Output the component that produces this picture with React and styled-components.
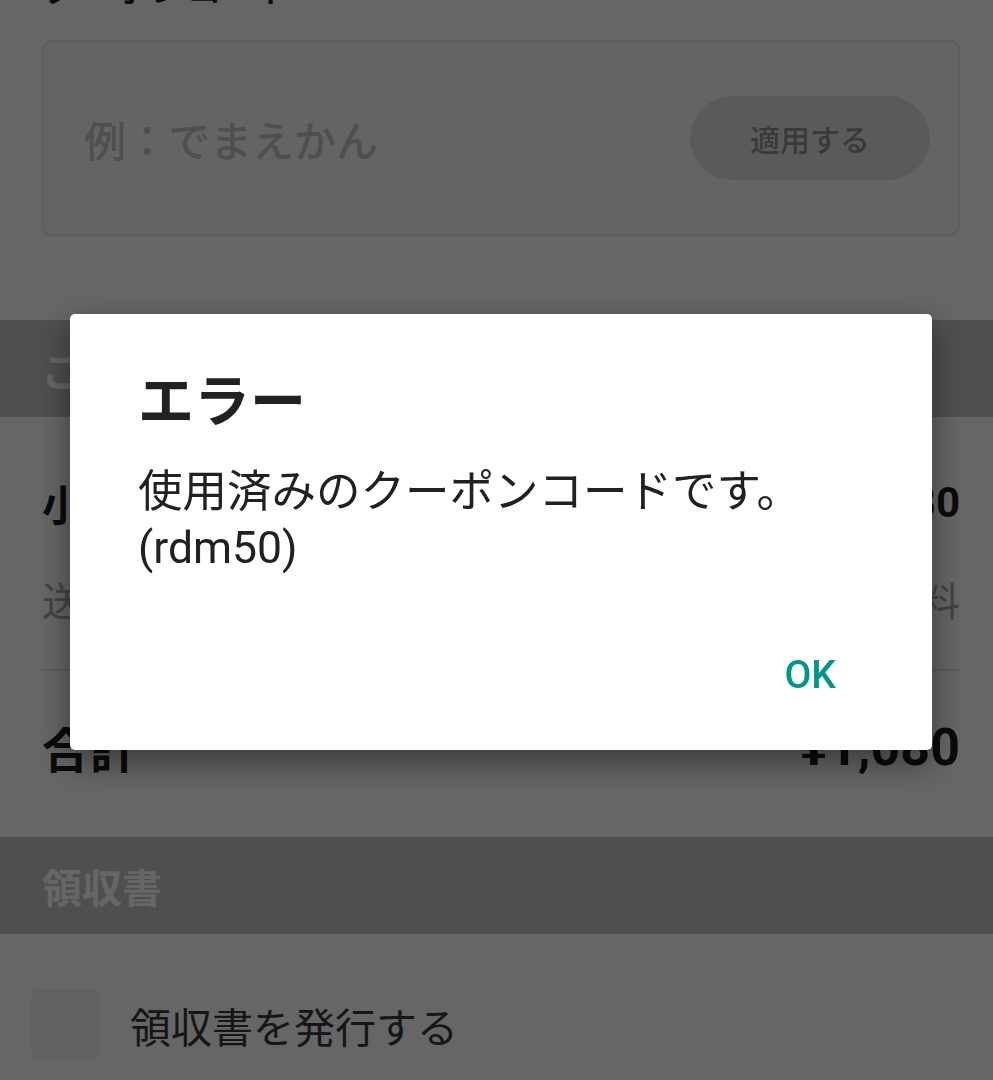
import React from 'react';
import styled, { createGlobalStyle } from 'styled-components';

const GlobalStyle = createGlobalStyle`
  html, body {
    margin: 0;
    padding: 0;
    background: #ffffff;
    height: 1080px;
    overflow: hidden;
  }
  body {
    font-family: Roboto, "Noto Sans CJK JP", "Noto Sans", sans-serif;
    color: #1a1a1a;
  }
`;

const Page = styled.div`
  display: flex;
  flex-direction: column;
  margin-top: -32px;
`;

const CouponSection = styled.section`
  display: flex;
  flex-direction: column;
  padding: 0 33px 84px 42px;
`;

const FieldLabel = styled.div`
  font-size: 36px;
  line-height: 44px;
  font-weight: 500;
  color: #1a1a1a;
`;

const CouponBox = styled.div`
  margin-top: 28px;
  height: 196px;
  box-sizing: border-box;
  border: 2px solid #ececec;
  border-radius: 10px;
  background: #fafafa;
  display: flex;
  align-items: center;
  justify-content: space-between;
  padding: 0 28px 0 40px;
`;

const Placeholder = styled.span`
  font-size: 42px;
  color: #c6c6c6;
  font-weight: 500;
`;

const ApplyButton = styled.button`
  width: 240px;
  height: 84px;
  border: none;
  border-radius: 42px;
  background: #e2e2e2;
  color: #8e8e8e;
  font-family: inherit;
  font-size: 30px;
  font-weight: 500;
`;

const SectionHeader = styled.div`
  height: 97px;
  background: #c5c5c5;
  display: flex;
  align-items: center;
  padding-left: 42px;
  font-size: 40px;
  font-weight: 700;
  color: #ffffff;
`;

const Summary = styled.section`
  display: flex;
  flex-direction: column;
  padding: 40px 33px 0 42px;
`;

const Row = styled.div`
  display: flex;
  align-items: center;
  justify-content: space-between;
  height: ${p => p.$h || 90}px;
  font-size: ${p => p.$size || 42}px;
  font-weight: ${p => (p.$muted ? 400 : 700)};
  color: ${p => (p.$muted ? '#a8a8a8' : '#1a1a1a')};
`;

const Divider = styled.hr`
  margin: 18px 0 0;
  border: none;
  border-top: 2px solid #e4e4e4;
`;

const TotalRow = styled.div`
  display: flex;
  align-items: center;
  justify-content: space-between;
  padding: 30px 0 44px;
  height: 92px;
  font-weight: 700;
  color: #1a1a1a;
`;

const TotalLabel = styled.span`
  font-size: 48px;
`;

const TotalValue = styled.span`
  font-size: 52px;
`;

const CheckRow = styled.label`
  display: flex;
  align-items: center;
  gap: 30px;
  padding: 56px 0 0 31px;
  font-size: 41px;
  color: #383838;
`;

const CheckBox = styled.span`
  width: 69px;
  height: 69px;
  box-sizing: border-box;
  border-radius: 9px;
  background: #f4f4f4;
  border: 1px solid #eeeeee;
`;

const Overlay = styled.div`
  position: fixed;
  inset: 0;
  background: rgba(0, 0, 0, 0.6);
  display: flex;
  align-items: flex-start;
  padding: 314px 0 0 70px;
`;

const Dialog = styled.div`
  width: 862px;
  box-sizing: border-box;
  background: #ffffff;
  border-radius: 5px;
  box-shadow: 0 12px 34px rgba(0, 0, 0, 0.45);
  padding: 56px 0 25px 68px;
  display: flex;
  flex-direction: column;
`;

const DialogTitle = styled.h2`
  margin: 0;
  font-size: 56px;
  line-height: 64px;
  font-weight: 700;
  color: #212121;
`;

const DialogMessage = styled.p`
  margin: 30px 0 0;
  font-size: 44.5px;
  line-height: 56px;
  color: #212121;
`;

const DialogActions = styled.div`
  display: flex;
  justify-content: flex-end;
  margin-top: 49px;
  padding-right: 72px;
`;

const TextButton = styled.button`
  height: 100px;
  padding: 0 24px;
  border: none;
  background: transparent;
  font-family: Roboto, sans-serif;
  font-size: 39px;
  font-weight: 500;
  color: #009688;
`;

export default function App() {
  return (
    <>
      <GlobalStyle />
      <Page>
        <CouponSection>
          <FieldLabel>クーポンコード</FieldLabel>
          <CouponBox>
            <Placeholder>例：でまえかん</Placeholder>
            <ApplyButton>適用する</ApplyButton>
          </CouponBox>
        </CouponSection>

        <SectionHeader>ご注文内容</SectionHeader>
        <Summary>
          <Row>
            <span>小計</span>
            <span>¥1,080</span>
          </Row>
          <Row $muted $size={40} $h={104}>
            <span>送料</span>
            <span>無料</span>
          </Row>
          <Divider />
          <TotalRow>
            <TotalLabel>合計</TotalLabel>
            <TotalValue>¥1,080</TotalValue>
          </TotalRow>
        </Summary>

        <SectionHeader>領収書</SectionHeader>
        <CheckRow>
          <CheckBox />
          領収書を発行する
        </CheckRow>
      </Page>

      <Overlay>
        <Dialog role="alertdialog">
          <DialogTitle>エラー</DialogTitle>
          <DialogMessage>
            使用済みのクーポンコードです。
            <br />
            (rdm50)
          </DialogMessage>
          <DialogActions>
            <TextButton>OK</TextButton>
          </DialogActions>
        </Dialog>
      </Overlay>
    </>
  );
}
